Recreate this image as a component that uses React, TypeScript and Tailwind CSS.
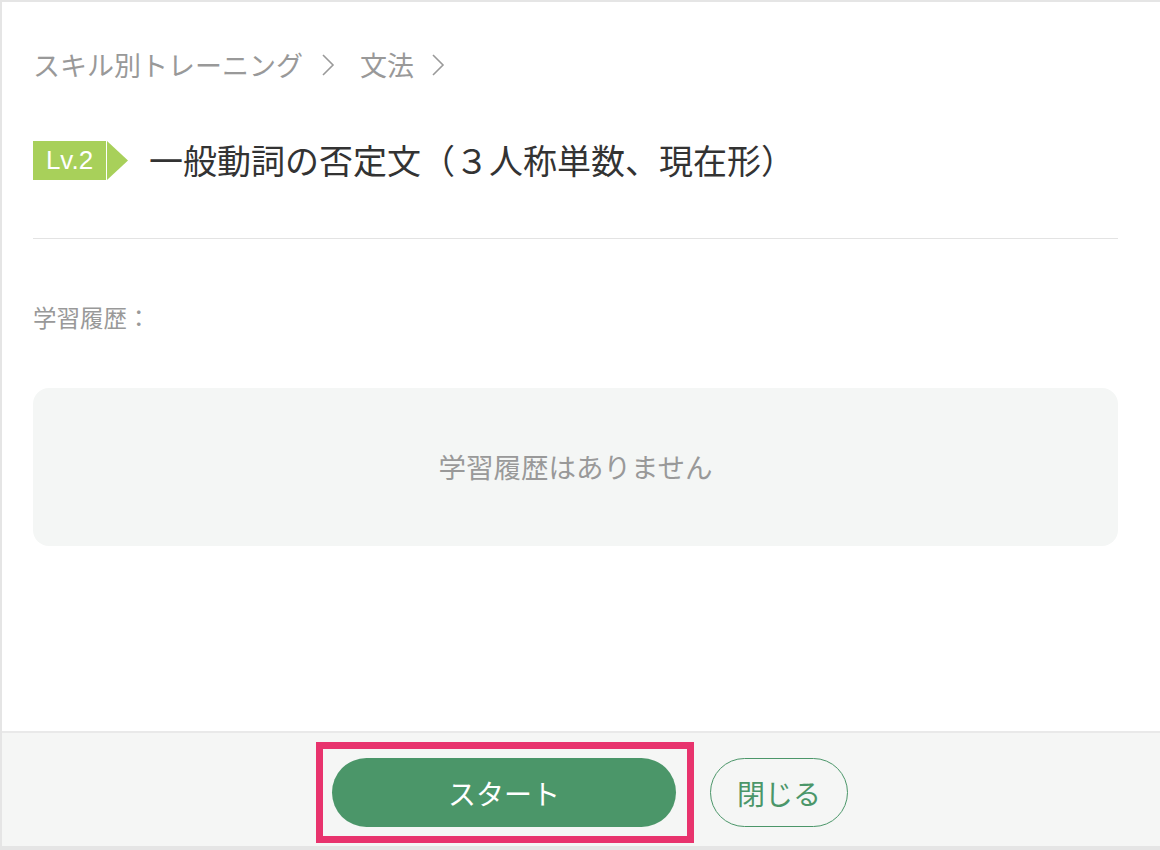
export default function App() {
  const jp = { fontFamily: '"Noto Sans CJK JP", "Noto Sans", sans-serif' };

  const Chevron = () => (
    <svg width="14" height="24" viewBox="0 0 14 24" className="shrink-0">
      <polyline points="2,2 12,12 2,22" fill="none" stroke="#9a9a9a" strokeWidth="1.6" />
    </svg>
  );

  return (
    <div className="w-[1160px] h-[850px] bg-[#e5e5e5] pt-[2px] pl-[2px] pb-[4px] flex flex-col" style={jp}>
      <div className="h-[729px] bg-white pl-[31px] pr-[42px] pt-[43px]">
        {/* breadcrumb */}
        <div className="flex items-center h-[40px] text-[27px] text-[#999] leading-[40px]">
          <span>スキル別トレーニング</span>
          <span className="ml-[18px] mr-[25px]"><Chevron /></span>
          <span>文法</span>
          <span className="ml-[17px]"><Chevron /></span>
        </div>

        {/* title */}
        <div className="mt-[55px] flex items-center h-[40px]">
          <div className="flex items-center h-[39px]">
            <div
              className="h-[39px] w-[73px] bg-[#a8d05a] text-white text-[26px] flex items-center justify-center"
              style={{ fontFamily: '"Liberation Sans", Arial, sans-serif' }}
            >
              Lv.2
            </div>
            <svg width="21" height="39" viewBox="0 0 21 39" className="ml-[1px]">
              <polygon points="0,0 21,19.5 0,39" fill="#a8d05a" />
            </svg>
          </div>
          <h1 className="ml-[21px] text-[34px] text-[#333] leading-[40px]">
            一般動詞の否定文（３人称単数、現在形）
          </h1>
        </div>

        <div className="mt-[58px] h-px bg-[#e3e3e3]" />

        <div className="mt-[63px] h-[30px] leading-[30px] text-[23.5px] text-[#999]">学習履歴：</div>

        <div className="mt-[56px] h-[158px] rounded-[16px] bg-[#f4f6f5] flex items-center justify-center text-[27.5px] text-[#999]">
          学習履歴はありません
        </div>
      </div>

      <div className="h-[115px] bg-[#f5f6f5] border-t-2 border-[#e9e9e9] flex items-start justify-center gap-[16px] pt-[9px] pl-[2px]">
        <div className="border-[7px] border-[#e8336d] p-[9px] pr-[11px]">
          <button className="w-[344px] h-[69px] rounded-full bg-[#4b9669] text-white text-[28px]">
            スタート
          </button>
        </div>
        <button className="mt-[16px] w-[138px] h-[69px] rounded-full border border-[#4b9669] text-[#4b9669] text-[28px]">
          閉じる
        </button>
      </div>
    </div>
  );
}
